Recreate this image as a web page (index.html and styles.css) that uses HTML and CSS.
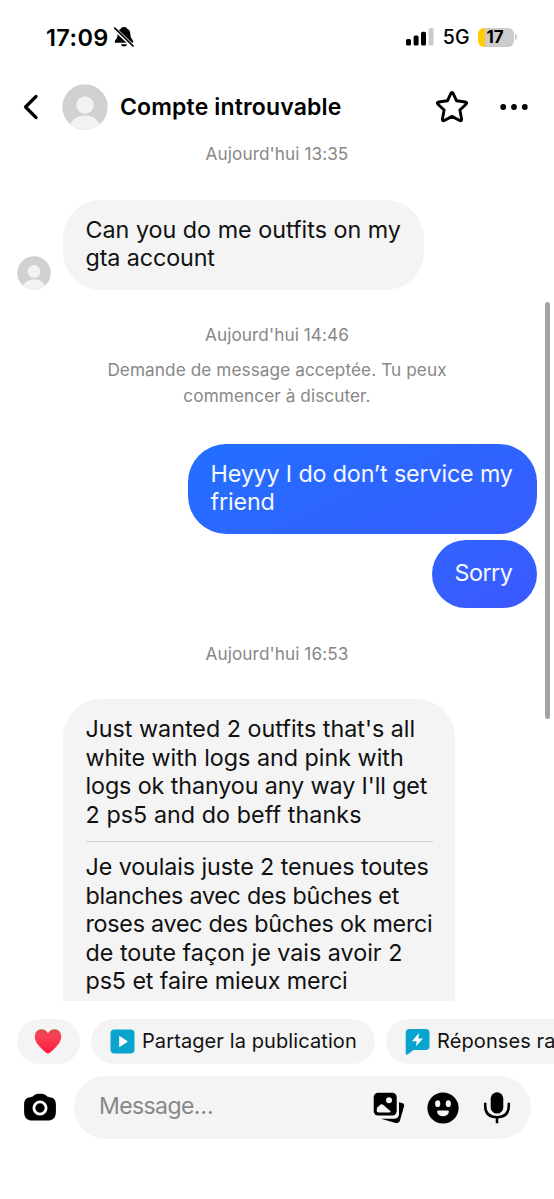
FILE: index.html
```
<!DOCTYPE html>
<html lang="fr">
<head>
<meta charset="utf-8">
<title>Compte introuvable</title>
<link rel="stylesheet" href="styles.css">
</head>
<body>
<div class="phone">
  <div class="status">
    <span class="time">17:09</span>
    <svg class="bell" width="20" height="22" viewBox="0 0 20 22"><path d="M10 1C7.900 1 7 2 6.800 2.700C4.300 3.700 3.700 5.800 3.600 8.600C3.500 12 2 13.300 1 14.700C.4 15.800.8 16.800 2 16.800H18C19.200 16.800 19.600 15.800 19 14.700C18 13.300 16.500 12 16.400 8.600C16.300 5.800 15.700 3.700 13.200 2.700C13 2 12.100 1 10 1ZM7 18.300H13C12.500 21.300 7.500 21.300 7 18.300Z"/><path d="M-.5 1.500L19.500 21" stroke="#fff" stroke-width="3.800"/><path d="M.8 2.200L19 20" stroke="#000" stroke-width="1.700" stroke-linecap="round"/></svg>
    <svg class="signal" width="28" height="18" viewBox="0 0 28 18"><rect y="11" width="5" height="6.500" rx="1.600"/><rect x="7.600" y="7.500" width="5" height="10" rx="1.600"/><rect x="15" y="3.800" width="5" height="13.700" rx="1.600"/><rect x="22.600" y="0" width="5" height="17.500" rx="1.600" fill="#ccc"/></svg>
    <span class="network">5G</span>
    <div class="battery"><span class="level">17</span></div>
    <span class="battery-tip"></span>
  </div>

  <header class="header">
    <svg class="back" width="16" height="26" viewBox="0 0 16 26"><path d="M13 2.500L2.500 13L13 23.500" fill="none" stroke="#000" stroke-width="3.200" stroke-linecap="round" stroke-linejoin="round"/></svg>
    <svg class="avatar-lg" viewBox="0 0 46 46"><defs><clipPath id="disc"><circle cx="23" cy="23" r="22.500"/></clipPath></defs><circle cx="23" cy="23" r="22.700" fill="#d0d1d3"/><g clip-path="url(#disc)" fill="#f2f2f4"><circle cx="23" cy="21" r="8.700"/><ellipse cx="23" cy="44" rx="15.500" ry="12.500"/></g></svg>
    <h1 class="title">Compte introuvable</h1>
    <svg class="star" width="34" height="34" viewBox="0 0 34 34"><path d="M15.900 3.300Q17 1.400 18.100 3.300L21.600 10.800L30.300 12Q32.500 12.500 31 14.200L24.900 20L26.600 29.200Q26.700 31.400 24.700 30.500L17 26.400L9.300 30.500Q7.300 31.400 7.400 29.200L9.100 20L3 14.200Q1.500 12.500 3.700 12L12.400 10.800Z" fill="none" stroke="#000" stroke-width="2.900" stroke-linejoin="round"/></svg>
    <svg class="more" width="28" height="8" viewBox="0 0 28 8"><circle cx="3.200" cy="4" r="2.900"/><circle cx="14" cy="4" r="2.900"/><circle cx="24.800" cy="4" r="2.900"/></svg>
  </header>

  <main class="thread">
    <p class="stamp first">Aujourd'hui 13:35</p>
    <div class="row received">
      <svg class="avatar-sm" viewBox="0 0 46 46"><circle cx="23" cy="23" r="22.700" fill="#d0d1d3"/><g clip-path="url(#disc)" fill="#f2f2f4"><circle cx="23" cy="21" r="8.700"/><ellipse cx="23" cy="44" rx="15.500" ry="12.500"/></g></svg>
      <div class="bubble b1">Can you do me outfits on my<br><span class="snug">gta account</span></div>
    </div>
    <p class="stamp second">Aujourd'hui 14:46</p>
    <p class="notice">Demande de message acceptée. Tu peux<br>commencer à discuter.</p>
    <div class="row sent"><div class="bubble b2">Heyyy I do don’t service my<br>friend</div></div>
    <div class="row sent"><div class="bubble b3">Sorry</div></div>
    <p class="stamp third">Aujourd'hui 16:53</p>
    <div class="row received">
      <div class="bubble b4">
        <p>Just wanted 2 outfits that's all<br>white with logs and pink with<br><span class="snug">logs ok thanyou any way I'll get</span><br><span class="loose">2 ps5 and do beff thanks</span></p>
        <hr class="divider">
        <p><span class="snug">Je voulais juste 2 tenues toutes</span><br><span class="tight">blanches avec des bûches et</span><br><span class="tight">roses avec des bûches ok merci</span><br>de toute façon je vais avoir 2<br><span class="snug">ps5 et faire mieux merci</span></p>
      </div>
    </div>
    <div class="scrollbar"></div>
  </main>

  <div class="chips">
    <div class="chip heart"><svg width="28" height="25" viewBox="0 0 28 25"><defs><linearGradient id="red" x1="0" y1="0" x2="0" y2="1"><stop offset="0" stop-color="#d9474c"/><stop offset=".25" stop-color="#f94455"/><stop offset="1" stop-color="#fa183f"/></linearGradient></defs><path d="M14 4.600C11.500-1 4.500-.8 1.800 3.600C-.8 8.300 1.500 13.600 6.500 18.500C9 21 12.500 24.500 14 24.500C15.500 24.500 19 21 21.500 18.500C26.500 13.600 28.800 8.300 26.200 3.600C23.500-.8 16.500-1 14 4.600Z" fill="url(#red)"/></svg></div>
    <div class="chip share"><svg width="25" height="25" viewBox="0 0 25 25"><rect x=".5" y=".5" width="24" height="24" rx="4" fill="#08a4ce"/><path d="M9.200 7.600Q9.200 6.700 10 7.200L17.200 11.900Q17.900 12.500 17.200 13.100L10 17.800Q9.200 18.200 9.200 17.400Z" fill="#fff"/></svg><span>Partager la publication</span></div>
    <div class="chip quick"><svg width="25" height="27" viewBox="0 0 25 27"><path d="M5 1H20.500Q24.500 1 24.500 5V18Q24.500 22 20.500 22H8.500L3 26.200Q.7 27.500.7 25V5Q.7 1 5 1Z" fill="#08a4ce"/><path d="M14 5L7 13.300H11.700L11 18.200L18 10.400H13.400Z" fill="#fff"/></svg><span>Réponses ra</span></div>
  </div>

  <footer class="composer">
    <svg class="camera" width="34" height="29" viewBox="0 0 34 29"><path d="M7.500 4.200C9.500 4 10.300 3.300 11.500 2.100C13.300.7 15 .7 17 .7S20.700.7 22.500 2.100C23.700 3.300 24.500 4 26.500 4.200C31 4.300 32.800 7 32.900 11.500V18C32.900 25 30.500 27.400 24 27.600H10C3.500 27.400 1.100 25 1.100 18V11.500C1.200 7 3 4.300 7.500 4.200Z"/><circle cx="17" cy="15" r="6.100" fill="none" stroke="#fff" stroke-width="2.800"/></svg>
    <div class="field">
      <span class="placeholder">Message…</span>
      <svg class="photos" width="32" height="32" viewBox="0 0 32 32"><path d="M26 10.200L29.800 11.300Q31.600 12 31.100 14L27 28.500Q26 31.700 22.700 30.900L8 26.700H21.500Q26 26.200 26 22Z"/><rect x=".7" y=".7" width="23" height="22.800" rx="4.500"/><circle cx="16" cy="8.300" r="3" fill="#f4f4f4"/><path d="M4 15.800L7.200 12.700Q8.800 11.500 10.400 12.900L17.300 19Q18.200 20.300 16.700 20.500H5.500Q3.700 20.300 3.700 18.700Z" fill="#f4f4f4"/></svg>
      <svg class="smiley" width="32" height="32" viewBox="0 0 32 32"><circle cx="16" cy="16" r="15.600"/><ellipse cx="10.700" cy="11.700" rx="2.600" ry="3.400" fill="#f4f4f4"/><ellipse cx="21.300" cy="11.700" rx="2.600" ry="3.400" fill="#f4f4f4"/><path d="M11.200 18.500H20.800Q22.200 18.600 21.900 20C20.800 25.800 11.200 25.800 10.100 20Q9.800 18.600 11.200 18.500Z" fill="#f4f4f4"/></svg>
      <svg width="28" height="32" viewBox="0 0 28 32"><rect x="7.700" y=".3" width="12.600" height="21.200" rx="6.300"/><path d="M2.200 10.700V14Q2.200 25.200 14 25.200T25.800 14V10.700M14 25V31.300" fill="none" stroke="#000" stroke-width="2.500"/></svg>
    </div>
  </footer>
</div>
</body>
</html>
```
FILE: styles.css
```
* { box-sizing: border-box; }
body { margin: 0; background: #fff; color: #111; font-family: Inter, "Noto Sans", sans-serif; }
p, h1 { margin: 0; }
svg { display: block; flex: none; }
.phone { display: flex; flex-direction: column; width: 554px; height: 1199px; overflow: hidden; }

.status { display: flex; align-items: center; height: 74px; padding: 0 37px 0 46px; color: #000; }
.time { font-size: 23.500px; font-weight: 600; letter-spacing: .4px; }
.bell { margin-left: 5px; }
.signal { margin-left: auto; }
.network { margin: 0 8px 0 9px; font-size: 19.500px; font-weight: 500; letter-spacing: .3px; }
.battery { width: 36px; height: 19px; padding-right: 2px; border-radius: 6px; background: linear-gradient(90deg, #fc0 6.500px, #ccc 6.500px); text-align: center; }
.level { display: block; font-size: 17px; line-height: 19px; font-weight: 700; }
.battery-tip { width: 2px; height: 6px; margin-left: 1px; border-radius: 0 2px 2px 0; background: #ccc; }

.header { display: flex; align-items: center; height: 66px; padding: 0 26px 0 23px; color: #000; }
.avatar-lg { width: 46px; height: 46px; margin-left: 23px; }
.title { margin-left: 12px; font-size: 23px; line-height: 30px; font-weight: 600; letter-spacing: .15px; white-space: nowrap; }
.star { margin-left: auto; margin-right: 31px; }

.thread { position: relative; height: 861px; padding-top: .5px; overflow: hidden; }
.stamp, .notice { color: #888; font-size: 17.200px; line-height: 26px; letter-spacing: .08px; text-align: center; white-space: nowrap; }
.stamp.first { margin-bottom: 33px; }
.stamp.second { margin-top: 32.500px; }
.notice { margin: 9px 0 34.500px; }
.stamp.third { margin-top: 33px; margin-bottom: 32.500px; }
.row { display: flex; align-items: flex-end; }
.received { padding-left: 63px; }
.sent { justify-content: flex-end; padding-right: 17px; margin-bottom: 6px; }
.avatar-sm { width: 34px; height: 34px; margin-left: -46px; margin-right: 12px; }
.bubble { padding: 16px 22.500px 17px; border-radius: 38px; background: #f4f4f4; font-size: 23.300px; line-height: 28.500px; white-space: nowrap; }
.snug { letter-spacing: -.1px; }
.tight { letter-spacing: -.26px; }
.loose { letter-spacing: .06px; }
.b1 { width: 361px; }
.b2 { width: 349px; color: #f5f8ff; background: linear-gradient(155deg, #2270ff, #375cff); letter-spacing: -.15px; }
.b3 { width: 105px; height: 68px; padding-top: 19px; color: #f5f8ff; background: linear-gradient(155deg, #3164ff, #3b58ff); letter-spacing: -.5px; }
.b4 { width: 392px; height: 340px; }
.divider { height: 1px; margin: 12px 0 11px; border: 0; background: #d2d2d2; }
.scrollbar { position: absolute; top: 162px; left: 545px; width: 5px; height: 417px; border-radius: 3px; background: #a3a3a3; }

.chips { display: flex; gap: 11.500px; padding: 18px 0 0 17px; height: 75px; }
.chip { display: flex; flex: none; align-items: center; height: 45px; border-radius: 23px; background: #f4f4f4; font-size: 20px; letter-spacing: .1px; white-space: nowrap; }
.chip span { margin-left: 7.500px; padding-bottom: 2px; }
.heart { width: 62.500px; justify-content: center; }
.share { width: 283.500px; padding-left: 18.500px; }
.quick { width: 240px; padding-left: 18.500px; }

.composer { display: flex; align-items: center; height: 63px; padding-left: 23px; }
.field { display: flex; align-items: center; width: 457px; height: 63px; margin-left: 17px; padding: 0 20px 0 25px; border-radius: 32px; background: #f4f4f4; }
.placeholder { margin-right: auto; padding-bottom: 3px; color: #888; font-size: 23px; letter-spacing: -.6px; }
.photos { margin-right: 22px; }
.smiley { margin-right: 24px; }
```
